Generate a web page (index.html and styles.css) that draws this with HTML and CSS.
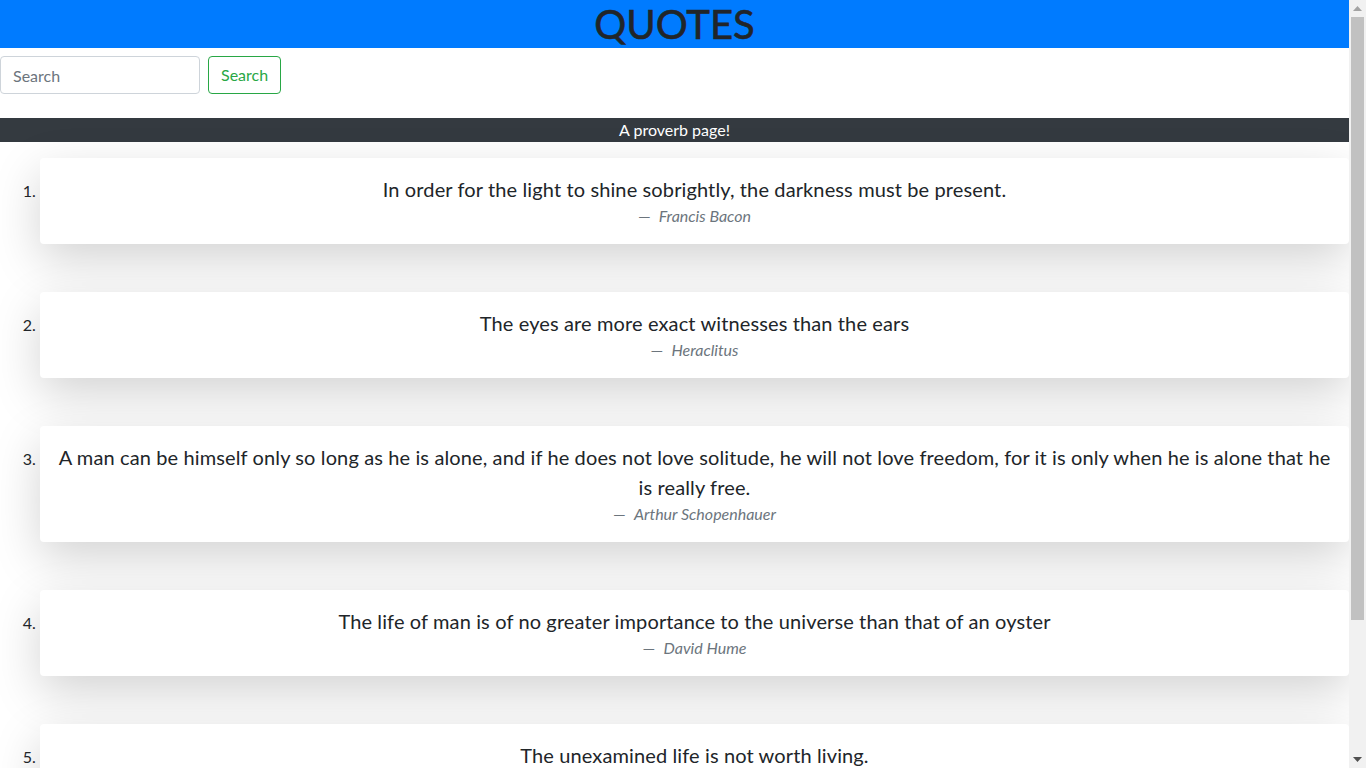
FILE: index.html
```html
<!DOCTYPE html>
<html lang="en">
<head>
<meta charset="utf-8">
<title>Quotes</title>
<link rel="stylesheet" href="styles.css">
</head>
<body>
<div class="page">
<header class="top">
  <h1 class="title">QUOTES</h1>
</header>
<form class="search">
  <input class="search-input" type="text" placeholder="Search">
  <button class="search-btn" type="button">Search</button>
</form>
<div class="banner">A proverb page!</div>
<ol class="quotes">
  <li class="quote-item">
    <div class="card">
      <blockquote class="quote">
        <p class="quote-text">In order for the light to shine sobrightly, the darkness must be present.</p>
        <footer class="quote-author">Francis Bacon</footer>
      </blockquote>
    </div>
  </li>
  <li class="quote-item">
    <div class="card">
      <blockquote class="quote">
        <p class="quote-text">The eyes are more exact witnesses than the ears</p>
        <footer class="quote-author">Heraclitus</footer>
      </blockquote>
    </div>
  </li>
  <li class="quote-item">
    <div class="card">
      <blockquote class="quote">
        <p class="quote-text">A man can be himself only so long as he is alone, and if he does not love solitude, he will not love freedom, for it is only when he is alone that he is really free.</p>
        <footer class="quote-author">Arthur Schopenhauer</footer>
      </blockquote>
    </div>
  </li>
  <li class="quote-item">
    <div class="card">
      <blockquote class="quote">
        <p class="quote-text">The life of man is of no greater importance to the universe than that of an oyster</p>
        <footer class="quote-author">David Hume</footer>
      </blockquote>
    </div>
  </li>
  <li class="quote-item">
    <div class="card">
      <blockquote class="quote">
        <p class="quote-text">The unexamined life is not worth living.</p>
        <footer class="quote-author">Socrates</footer>
      </blockquote>
    </div>
  </li>
</ol>
</div>
<div class="scrollbar" aria-hidden="true">
  <div class="sb-btn"><svg width="9" height="5" viewBox="0 0 9 5"><path d="M0 5 L4.5 0 L9 5 Z" fill="#a3a3a3"/></svg></div>
  <div class="sb-track"><div class="sb-thumb"></div></div>
  <div class="sb-btn"><svg width="9" height="5" viewBox="0 0 9 5"><path d="M0 0 L9 0 L4.5 5 Z" fill="#505050"/></svg></div>
</div>
</body>
</html>
```
FILE: styles.css
```css
html, body {
  margin: 0;
  padding: 0;
  height: 100%;
  overflow: hidden;
}
body {
  display: flex;
  font-family: "Lato", "Noto Sans", sans-serif;
  font-size: 16px;
  line-height: 1.5;
  color: #212529;
  background: #fff;
}
.page {
  flex: 1;
  min-width: 0;
  height: 100vh;
  overflow: hidden;
}
.scrollbar {
  width: 17px;
  height: 100vh;
  background: #f1f1f1;
  display: flex;
  flex-direction: column;
}
.sb-btn {
  height: 17px;
  display: flex;
  align-items: center;
  justify-content: center;
}
.sb-track {
  flex: 1;
  padding: 0 2px;
}
.sb-thumb {
  height: 603px;
  background: #c1c1c1;
}
.top {
  background: #007bff;
  text-align: center;
}
.title {
  margin: 0;
  font-size: 40px;
  line-height: 48px;
  font-weight: 400;
  color: #212529;
  -webkit-text-stroke: 0.6px #212529;
}
.search {
  display: flex;
  gap: 8px;
  padding: 8px 0 24px;
  margin: 0;
}
.search-input {
  box-sizing: border-box;
  width: 200px;
  height: 38px;
  padding: 6px 12px;
  font: inherit;
  color: #495057;
  border: 1px solid #ced4da;
  border-radius: 4px;
  outline: none;
}
.search-input::placeholder {
  color: #6c757d;
}
.search-btn {
  box-sizing: border-box;
  height: 38px;
  padding: 6px 12px;
  font: inherit;
  color: #28a745;
  background: transparent;
  border: 1px solid #28a745;
  border-radius: 4px;
}
.banner {
  background: #343a40;
  color: #fff;
  text-align: center;
  line-height: 24px;
}
.quotes {
  margin: 16px 0 80px;
  padding-left: 40px;
}
.quote-item {
  margin-bottom: 48px;
}
.card {
  background: #fff;
  border-radius: 4px;
  box-shadow: 0 16px 48px rgba(0, 0, 0, 0.175);
  padding: 16px;
}
.quote {
  margin: 0;
  text-align: center;
  font-size: 20px;
}
.quote-text {
  margin: 0;
  line-height: 30px;
  letter-spacing: 0.12px;
}
.quote-author {
  font-size: 16px;
  line-height: 24px;
  color: #6c757d;
  font-style: italic;
}
.quote-author::before {
  content: "\2014\00A0\00A0";
  font-style: normal;
}
```
